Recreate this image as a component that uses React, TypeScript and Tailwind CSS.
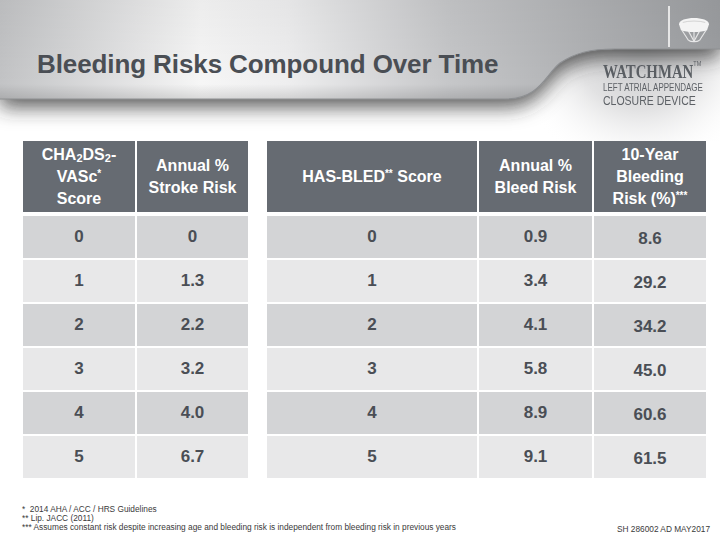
import React from "react";

const rows: string[][] = [
  ["0", "0", "0", "0.9", "8.6"],
  ["1", "1.3", "1", "3.4", "29.2"],
  ["2", "2.2", "2", "4.1", "34.2"],
  ["3", "3.2", "3", "5.8", "45.0"],
  ["4", "4.0", "4", "8.9", "60.6"],
  ["5", "6.7", "5", "9.1", "61.5"],
];

const gridCols = "grid grid-cols-[112px_111px_15px_210px_113px_112px] gap-x-[2px]";

function Banner() {
  return (
    <svg className="absolute inset-0" width="720" height="141" viewBox="0 0 720 141">
      <defs>
        <linearGradient id="band" x1="0" y1="0" x2="720" y2="0" gradientUnits="userSpaceOnUse">
          <stop offset="0" stopColor="#c2c3c5" />
          <stop offset="0.28" stopColor="#f6f6f6" />
          <stop offset="0.4" stopColor="#eeeeef" />
          <stop offset="0.62" stopColor="#c6c7c9" />
          <stop offset="1" stopColor="#9b9da0" />
        </linearGradient>
        <linearGradient id="vshade" x1="0" y1="0" x2="0" y2="99" gradientUnits="userSpaceOnUse">
          <stop offset="0" stopColor="#000" stopOpacity="0.04" />
          <stop offset="0.85" stopColor="#000" stopOpacity="0" />
          <stop offset="1" stopColor="#000" stopOpacity="0.12" />
        </linearGradient>
        <radialGradient id="under" cx="640" cy="45" r="130" gradientUnits="userSpaceOnUse">
          <stop offset="0" stopColor="#c4c5c7" />
          <stop offset="0.5" stopColor="#e2e2e3" />
          <stop offset="1" stopColor="#ffffff" stopOpacity="0" />
        </radialGradient>
        <filter id="sh" x="-10%" y="-20%" width="120%" height="170%">
          <feDropShadow dx="0" dy="8" stdDeviation="10" floodColor="#333" floodOpacity="0.8" />
        </filter>
      </defs>
      <rect x="460" y="30" width="260" height="111" fill="url(#under)" />
      <path
        d="M0,0 H720 V49 H615 C590,49 575,53 560,63 C545,75 540,99 505,99 H0 Z"
        fill="url(#band)"
        filter="url(#sh)"
      />
      <path d="M0,0 H720 V49 H615 C590,49 575,53 560,63 C545,75 540,99 505,99 H0 Z" fill="url(#vshade)" />
      <path
        d="M720,49 H615 C590,49 575,53 560,63 C545,75 540,99 505,99 H0"
        fill="none"
        stroke="#8d8f92"
        strokeWidth="1.2"
      />
    </svg>
  );
}

function DeviceIcon() {
  return (
    <svg width="34" height="30" viewBox="0 0 36 32">
      <path d="M2,11 C2,2 34,2 34,11 L32,17 C26,20 10,20 4,17 Z" fill="#f4f4f4" />
      <path d="M6,9 C12,7 24,7 30,9" stroke="#d0d0d0" strokeWidth="1" fill="none" />
      <g stroke="#f0f0f0" strokeWidth="1.2" fill="none" opacity="0.9">
        <path d="M5,17 L12,28" />
        <path d="M31,17 L24,28" />
        <path d="M12,18 L18,29" />
        <path d="M24,18 L18,29" />
        <path d="M18,19 L18,29" />
        <path d="M12,28 C15,30 21,30 24,28" />
      </g>
    </svg>
  );
}

export default function App() {
  return (
    <div className="w-[720px] h-[540px] bg-white overflow-hidden font-['Liberation_Sans',Arial,sans-serif] flex flex-col">
      {/* header */}
      <div className="relative h-[141px] shrink-0 flex justify-between">
        <Banner />
        <h1 className="relative pl-[37px] pt-[49px] text-[26px] leading-[30px] font-bold text-[#4a4e54] tracking-[-0.1px]">
          Bleeding Risks Compound Over Time
        </h1>
        <div className="relative w-[117px] flex flex-col">
          <div className="flex items-start h-[62px]">
            <div className="ml-[65px] mt-[6px] w-[2px] h-[41px] bg-[#e6e6e6]" />
            <div className="ml-[7px] mt-[14px]">
              <DeviceIcon />
            </div>
          </div>
          <div className="flex items-start h-[20px]">
            <span className="origin-left scale-x-[0.78] font-['Liberation_Serif',serif] font-bold text-[19px] leading-[20px] text-[#5a5e63] whitespace-nowrap">
              WATCHMAN<sup className="text-[7px] align-top relative top-[2px] font-['Liberation_Sans',sans-serif] font-normal">TM</sup>
            </span>
          </div>
          <div className="origin-left scale-x-[0.8] text-[10px] leading-[12px] text-[#5d6166] whitespace-nowrap">
            LEFT ATRIAL APPENDAGE
          </div>
          <div className="origin-left scale-x-[0.84] text-[12.5px] leading-[14px] text-[#5d6166] whitespace-nowrap">
            CLOSURE DEVICE
          </div>
        </div>
      </div>

      {/* table */}
      <div className="ml-[23px] flex flex-col">
        <div className={`${gridCols} h-[71px] text-white font-bold text-[16px] leading-[22px] text-center`}>
          <div className="bg-[#666b72] flex items-center justify-center">
            <div>
              CHA<sub className="text-[11px]">2</sub>DS<sub className="text-[11px]">2</sub>-<br />
              VASc<sup className="text-[10px]">*</sup>
              <br />
              Score
            </div>
          </div>
          <div className="bg-[#666b72] flex items-center justify-center">
            <div>
              Annual %<br />
              Stroke Risk
            </div>
          </div>
          <div />
          <div className="bg-[#666b72] flex items-center justify-center">
            <div>
              HAS-BLED<sup className="text-[10px]">**</sup> Score
            </div>
          </div>
          <div className="bg-[#666b72] flex items-center justify-center">
            <div>
              Annual %<br />
              Bleed Risk
            </div>
          </div>
          <div className="bg-[#666b72] flex items-center justify-center">
            <div>
              10-Year
              <br />
              Bleeding
              <br />
              Risk (%)<sup className="text-[10px]">***</sup>
            </div>
          </div>
        </div>
        <div className="mt-[4px] flex flex-col gap-y-[2px]">
          {rows.map((r, i) => {
            const bg = i % 2 === 0 ? "bg-[#d3d4d6]" : "bg-[#e8e8e9]";
            return (
              <div key={i} className={`${gridCols} h-[42px] text-[#4a4e55] font-bold text-[17px] text-center`}>
                <div className={`${bg} flex items-center justify-center`}>{r[0]}</div>
                <div className={`${bg} flex items-center justify-center`}>{r[1]}</div>
                <div />
                <div className={`${bg} flex items-center justify-center`}>{r[2]}</div>
                <div className={`${bg} flex items-center justify-center`}>{r[3]}</div>
                <div className={`${bg} flex items-center justify-center pt-[3px]`}>{r[4]}</div>
              </div>
            );
          })}
        </div>
      </div>

      {/* footer */}
      <div className="flex justify-between items-end mt-[27px] pl-[22px] pr-[10px] text-[#3a3a3a] text-[8.3px] leading-[9px]">
        <div className="flex flex-col">
          <div>* &nbsp;2014 AHA / ACC / HRS Guidelines</div>
          <div>** Lip. JACC (2011)</div>
          <div>*** Assumes constant risk despite increasing age and bleeding risk is independent from bleeding risk in previous years</div>
        </div>
        <div className="text-[8.3px] mb-[-2px]">SH 286002 AD MAY2017</div>
      </div>
    </div>
  );
}
